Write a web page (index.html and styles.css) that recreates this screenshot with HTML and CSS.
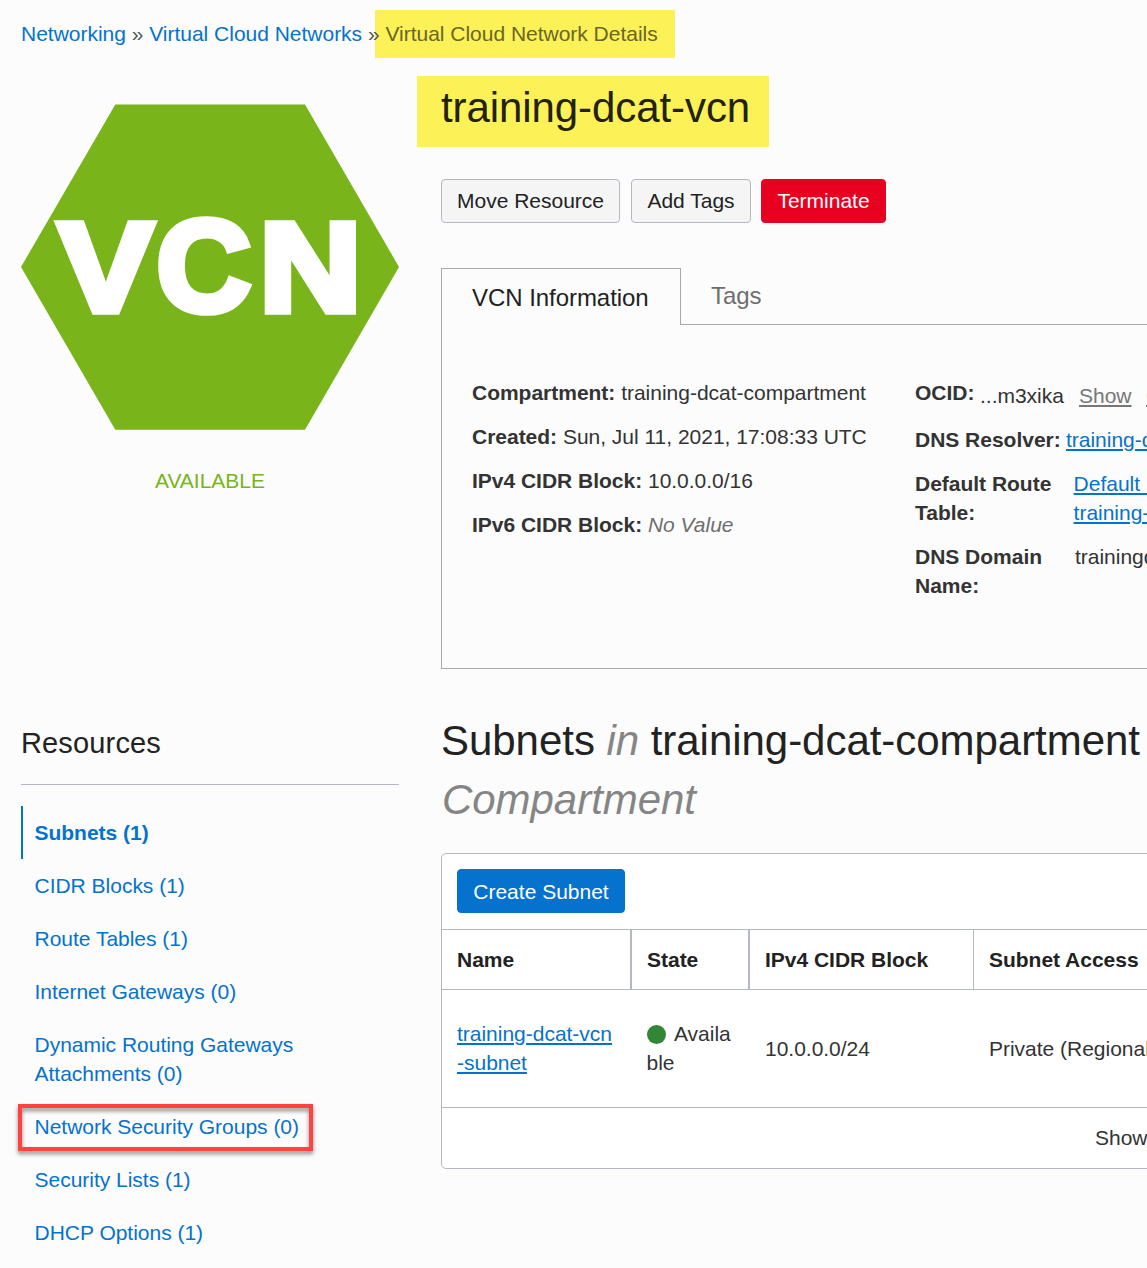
FILE: index.html
```html
<!DOCTYPE html>
<html lang="en">
<head>
<meta charset="utf-8">
<title>Virtual Cloud Network Details</title>
<link rel="stylesheet" href="styles.css">
</head>
<body>
<div class="page">
  <nav class="crumbs"><a class="crumb-a">Networking</a> » <a class="crumb-b">Virtual Cloud Networks</a> » <span class="crumb-current">Virtual Cloud Network Details</span></nav>
  <div class="overview">
    <aside class="status">
      <svg class="hexagon" viewBox="21 104 378 326" width="378" height="326">
        <path d="M115.3 104.4H305L399 267L305 429.7H115.3L21 267Z" fill="#78b41a"/>
        <g class="hexagon-text">
          <text transform="translate(105.8 311) scale(1.12 1)">V</text>
          <text transform="translate(203.8 311.3) scale(1.03 1.02)">C</text>
          <text transform="translate(310.3 311) scale(1.115 1)">N</text>
        </g>
      </svg>
      <p class="state">AVAILABLE</p>
    </aside>
    <main class="details">
      <h1><span class="marked">training-dcat-vcn</span></h1>
      <div class="actions">
        <button class="btn move">Move Resource</button>
        <button class="btn tag">Add Tags</button>
        <button class="btn danger">Terminate</button>
      </div>
      <div class="tabs">
        <div class="tab active"><span>VCN Information</span></div>
        <div class="tab"><span>Tags</span></div>
      </div>
      <section class="info">
        <div class="facts">
          <p><b>Compartment:</b> <span>training-dcat-compartment</span></p>
          <p><b>Created:</b> <span>Sun, Jul 11, 2021, 17:08:33 UTC</span></p>
          <p><b>IPv4 CIDR Block:</b> <span>10.0.0.0/16</span></p>
          <p><b>IPv6 CIDR Block:</b> <i>No Value</i></p>
        </div>
        <div class="facts">
          <div class="fact ocid"><b>OCID:</b><span class="id">...m3xika</span><a class="show">Show</a><a class="copy">Copy</a></div>
          <div class="fact resolver"><b>DNS Resolver:</b><a>training-dcat-vcn</a></div>
          <div class="fact wide"><b>Default Route<br>Table:</b><a>Default Route Table for<br>training-dcat-vcn</a></div>
          <div class="fact wide domain"><b>DNS Domain<br>Name:</b><span>trainingdcat</span></div>
        </div>
      </section>
    </main>
  </div>
  <div class="lower">
    <aside class="resources">
      <h3><span>Resources</span></h3>
      <ul>
        <li class="selected">Subnets (1)</li>
        <li>CIDR Blocks (1)</li>
        <li>Route Tables (1)</li>
        <li>Internet Gateways (0)</li>
        <li>Dynamic Routing Gateways<br>Attachments (0)</li>
        <li class="boxed">Network Security Groups (0)</li>
        <li>Security Lists (1)</li>
        <li>DHCP Options (1)</li>
      </ul>
    </aside>
    <section class="subnets">
      <h2>Subnets <i>in</i> training-dcat-compartment<br><i class="kind">Compartment</i></h2>
      <div class="card">
        <div class="toolbar"><button class="btn primary">Create Subnet</button></div>
        <div class="row head">
          <div>Name</div><div>State</div><div>IPv4 CIDR Block</div><div>Subnet Access</div>
        </div>
        <div class="row">
          <div class="double"><a>training-dcat-vcn<br>-subnet</a></div>
          <div class="double"><span><span class="dot"></span>Availa<br>ble</span></div>
          <div>10.0.0.0/24</div>
          <div>Private (Regional)</div>
        </div>
        <div class="foot">Showing 1 Item</div>
      </div>
    </section>
  </div>
</div>
</body>
</html>
```
FILE: styles.css
```css
*, *::before, *::after { box-sizing: border-box; }
html, body { margin: 0; overflow: hidden; }
body {
  background: #fcfcfc;
  color: #333;
  font: 21px/29px "Liberation Sans", Arial, sans-serif;
  letter-spacing: -0.015px;
}
h1, h2, h3, p, ul { margin: 0; padding: 0; font-weight: 400; color: inherit; }
.page {
  position: relative;
  z-index: 0;
  width: 1147px;
  height: 1268px;
  padding: 19px 0 0 21px;
  overflow: hidden;
  white-space: nowrap;
}
a, li { color: #0572ce; }

.crumbs { height: 29px; color: #555; }
.crumb-current { position: relative; color: #6a6626; }
.crumb-current::before {
  content: "";
  position: absolute;
  z-index: -1;
  left: -10.6px;
  top: -12px;
  width: 300px;
  height: 48px;
  background: #fcf157;
}

.overview, .lower { display: flex; gap: 42px; }
.overview { height: 621px; }
.status, .resources { flex: none; width: 378px; }
.status { padding-top: 56px; }
.hexagon { display: block; }
.hexagon-text {
  font: bold 126.5px "Liberation Sans", Arial, sans-serif;
  text-anchor: middle;
  fill: #fff;
  stroke: #fff;
  stroke-width: 7.5px;
  stroke-miterlimit: 2;
}
.state { margin-top: 36px; text-align: center; color: #78b41a; }

.details { flex: none; width: 740px; }
h1 { padding-top: 30px; height: 131px; font-size: 42px; line-height: 60px; letter-spacing: -0.08px; color: #22220b; }
.marked { position: relative; }
.marked::before {
  content: "";
  position: absolute;
  z-index: -1;
  left: -24px;
  top: -8px;
  width: 352px;
  height: 71px;
  background: #fcf157;
}
.actions { display: flex; height: 89px; }
.btn {
  height: 44px;
  padding: 0 0 1px;
  border: 1px solid #b3b8c2;
  border-radius: 4px;
  background: #f5f5f5;
  color: #222;
  font: inherit;
}
.move { width: 179px; margin-right: 11px; }
.tag { width: 120px; margin-right: 10px; }
.danger { width: 125px; border-color: #e7001f; background: #e7001f; color: #fff; }
.primary { width: 168px; padding: 1px 0 0; border-color: #0572ce; background: #0572ce; color: #fff; }

.tabs { display: flex; height: 57px; }
.tab {
  flex: 1;
  padding: 13px 0 0 30px;
  border-bottom: 1px solid #a9a9a9;
  color: #6e6e6e;
  font-size: 24px;
  letter-spacing: -0.05px;
}
.tab.active {
  flex: none;
  width: 240px;
  padding-top: 14px;
  border: 1px solid #a9a9a9;
  border-bottom: 0;
  color: #222;
}
.info {
  display: flex;
  height: 344px;
  padding: 53px 0 0 30px;
  border: solid #a9a9a9;
  border-width: 0 0 1px 1px;
}
.facts { flex: none; display: flex; flex-direction: column; gap: 15px; width: 443px; }
.facts i { color: #6e6e6e; }
.fact { display: flex; }
.fact a, .row a { text-decoration: underline 2px; text-underline-offset: 2px; }
.ocid { height: 32px; }
.ocid b { width: 65px; }
.ocid .id, .ocid a { padding-top: 3px; }
.ocid .id { width: 99px; }
.ocid .show { width: 67px; }
.ocid a { color: #767676; }
.resolver b { width: 151px; }
.wide b { width: 158.6px; }
.domain b { width: 160px; }

.lower { padding-top: 42px; }
h3 { height: 74px; padding-top: 18px; border-bottom: 1px solid #b3b8c2; font-size: 29px; letter-spacing: .15px; color: #222; }
ul { list-style: none; padding-top: 21px; }
li { position: relative; padding: 12px 0 12px 13.5px; }
.selected { border-left: 2px solid #0572ce; padding-left: 11.5px; font-weight: 700; }
.boxed::after {
  content: "";
  position: absolute;
  left: -3px;
  top: 4px;
  width: 295px;
  height: 47px;
  border: 4px solid #ff4343;
  filter: drop-shadow(0 3px 2px rgba(0, 0, 0, .45));
}
.subnets { flex: none; width: 740px; }
h2 { height: 142px; font-size: 42px; line-height: 59px; letter-spacing: -0.04px; color: #222; }
h2 i { color: #858585; }
.kind { padding-left: 1px; }
.card { border: 1px solid #b3b8c2; border-radius: 5px; background: #fff; }
.toolbar { height: 75px; padding: 15px; }
.row {
  display: grid;
  grid-template-columns: 190px 118px 224px 1fr;
  height: 118px;
  border-top: 1px solid #b3b8c2;
}
.row > div { display: flex; align-items: center; padding-left: 15px; }
.row > .double { padding-bottom: 2px; }
.row > .double + .double { padding-left: 14.5px; }
.row.head { height: 60px; color: #222; font-weight: 700; }
.head > div { border-right: 2px solid #b3b8c2; }
.head > div:nth-child(3) { border-right-width: 1px; }
.dot {
  display: inline-block;
  width: 19px;
  height: 19px;
  margin-right: 8.5px;
  border-radius: 50%;
  background: #338538;
  vertical-align: -3px;
}
.foot { height: 61px; padding: 15px 0 0 653px; border-top: 1px solid #b3b8c2; }
```
